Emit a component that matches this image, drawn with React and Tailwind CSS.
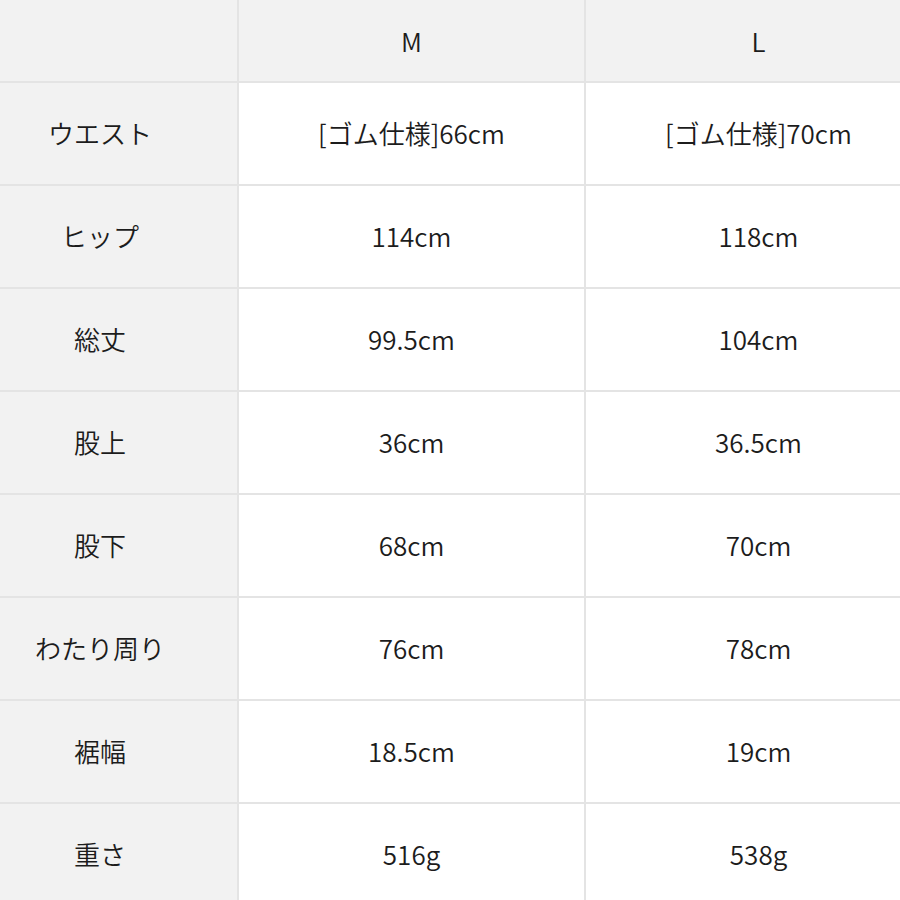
const rows = [
  ["ウエスト", "[ゴム仕様]66cm", "[ゴム仕様]70cm"],
  ["ヒップ", "114cm", "118cm"],
  ["総丈", "99.5cm", "104cm"],
  ["股上", "36cm", "36.5cm"],
  ["股下", "68cm", "70cm"],
  ["わたり周り", "76cm", "78cm"],
  ["裾幅", "18.5cm", "19cm"],
  ["重さ", "516g", "538g"],
];

const font = {
  fontFamily: '"Noto Sans CJK JP", "Noto Sans", sans-serif',
};

const App = () => {
  return (
    <div className="w-[900px] h-[900px] overflow-hidden bg-white" style={font}>
      <div className="ml-[-37px] w-[970px] grid grid-cols-[274px_345px_345px] grid-rows-[81px_repeat(8,101px)] gap-[2px] bg-[#e4e4e4] text-[#1c1c1c] text-[26px] font-[350]">
        <div className="bg-[#f2f2f2]"></div>
        <div className="bg-[#f2f2f2] flex items-center justify-center">M</div>
        <div className="bg-[#f2f2f2] flex items-center justify-center">L</div>
        {rows.map(([label, m, l]) => (
          <div key={label} className="contents">
            <div className="bg-[#f2f2f2] flex items-center justify-center pb-[3px]">{label}</div>
            <div className="bg-white flex items-center justify-center pb-[3px]">{m}</div>
            <div className="bg-white flex items-center justify-center pb-[3px]">{l}</div>
          </div>
        ))}
      </div>
    </div>
  );
};

export default App;
